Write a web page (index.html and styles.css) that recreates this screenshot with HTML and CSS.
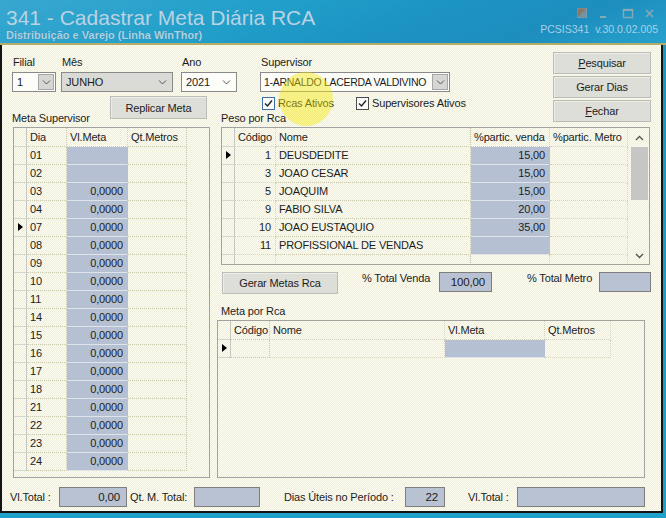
FILE: index.html
```html
<!doctype html>
<html lang="pt-br">

<head>
  <meta charset="utf-8">
  <title>341 - Cadastrar Meta Diária RCA</title>
  <link rel="stylesheet" href="styles.css">
</head>

<body>
  <div id="window">

    <!-- TITLE BAR -->
    <div id="titlebar">
      <div class="title-left">
        <div class="title">341 - Cadastrar Meta Diária RCA</div>
        <div class="subtitle">Distribuição e Varejo (Linha WinThor)</div>
      </div>
      <div class="title-right">
        <svg class="wincontrols" width="80" height="12" viewBox="0 0 80 12">
          <rect x="0.5" y="1.5" width="9" height="9" fill="#6f94a8" stroke="#7c98a8" />
          <polygon points="0.5,1.5 9.5,1.5 0.5,10.5" fill="#927664" />
          <line x1="23" y1="10" x2="29" y2="10" stroke="#86a9ba" stroke-width="2" />
          <rect x="46.5" y="2.5" width="9" height="8" fill="none" stroke="#86a9ba" stroke-width="1.4" />
          <line x1="46" y1="3" x2="56" y2="3" stroke="#86a9ba" stroke-width="2" />
          <line x1="69" y1="3" x2="76" y2="10" stroke="#86a9ba" stroke-width="1.6" />
          <line x1="76" y1="3" x2="69" y2="10" stroke="#86a9ba" stroke-width="1.6" />
        </svg>
        <div class="version">PCSIS341&nbsp; v.30.0.02.005</div>
      </div>
    </div>

    <!-- FORM -->
    <div id="form">

      <div class="filters">
        <div class="field f-filial">
          <label>Filial</label>
          <div class="combo">
            <span class="combo-text">1</span>
            <span class="drop boxed"><svg width="9" height="5" viewBox="0 0 9 5"><path d="M1 0.5 L4.5 4 L8 0.5" fill="none" stroke="#555" /></svg></span>
          </div>
        </div>
        <div class="field f-mes">
          <label>Mês</label>
          <div class="combo gray">
            <span class="combo-text">JUNHO</span>
            <span class="drop"><svg width="9" height="5" viewBox="0 0 9 5"><path d="M1 0.5 L4.5 4 L8 0.5" fill="none" stroke="#555" /></svg></span>
          </div>
        </div>
        <div class="field f-ano">
          <label>Ano</label>
          <div class="combo">
            <span class="combo-text">2021</span>
            <span class="drop"><svg width="9" height="5" viewBox="0 0 9 5"><path d="M1 0.5 L4.5 4 L8 0.5" fill="none" stroke="#555" /></svg></span>
          </div>
        </div>
        <div class="field f-sup">
          <label>Supervisor</label>
          <div class="combo">
            <span class="combo-text">1-ARNALDO LACERDA VALDIVINO</span>
            <span class="drop boxed"><svg width="9" height="5" viewBox="0 0 9 5"><path d="M1 0.5 L4.5 4 L8 0.5" fill="none" stroke="#555" /></svg></span>
          </div>
        </div>
      </div>

      <div class="checks">
        <div class="chk chk-rcas">
          <span class="box hover"><svg width="11" height="11" viewBox="0 0 11 11"><path d="M2 5.5 L4.5 8 L9 2.5" fill="none" stroke="#222" stroke-width="1.4" /></svg></span>
          <span>Rcas Ativos</span>
        </div>
        <div class="chk">
          <span class="box"><svg width="11" height="11" viewBox="0 0 11 11"><path d="M2 5.5 L4.5 8 L9 2.5" fill="none" stroke="#222" stroke-width="1.4" /></svg></span>
          <span>Supervisores Ativos</span>
        </div>
      </div>

      <div class="buttons">
        <button type="button"><u>P</u>esquisar</button>
        <button type="button">Gerar Dias</button>
        <button type="button"><u>F</u>echar</button>
      </div>

      <button type="button" class="replicar">Replicar Meta</button>

      <div class="section-label lbl-sup">Meta Supervisor</div>
      <div class="section-label lbl-peso">Peso por Rca</div>

      <!-- META SUPERVISOR -->
      <div class="grid-box grid-sup">
        <div class="g-row g-head"><span class="ind"></span><span>Dia</span><span>Vl.Meta</span><span>Qt.Metros</span></div>
        <div class="g-row"><span class="ind"></span><span>01</span><span class="blue num"></span><span></span></div>
        <div class="g-row"><span class="ind"></span><span>02</span><span class="blue num"></span><span></span></div>
        <div class="g-row"><span class="ind"></span><span>03</span><span class="blue num">0,0000</span><span></span></div>
        <div class="g-row"><span class="ind"></span><span>04</span><span class="blue num">0,0000</span><span></span></div>
        <div class="g-row"><span class="ind cur"></span><span>07</span><span class="blue num">0,0000</span><span></span></div>
        <div class="g-row"><span class="ind"></span><span>08</span><span class="blue num">0,0000</span><span></span></div>
        <div class="g-row"><span class="ind"></span><span>09</span><span class="blue num">0,0000</span><span></span></div>
        <div class="g-row"><span class="ind"></span><span>10</span><span class="blue num">0,0000</span><span></span></div>
        <div class="g-row"><span class="ind"></span><span>11</span><span class="blue num">0,0000</span><span></span></div>
        <div class="g-row"><span class="ind"></span><span>14</span><span class="blue num">0,0000</span><span></span></div>
        <div class="g-row"><span class="ind"></span><span>15</span><span class="blue num">0,0000</span><span></span></div>
        <div class="g-row"><span class="ind"></span><span>16</span><span class="blue num">0,0000</span><span></span></div>
        <div class="g-row"><span class="ind"></span><span>17</span><span class="blue num">0,0000</span><span></span></div>
        <div class="g-row"><span class="ind"></span><span>18</span><span class="blue num">0,0000</span><span></span></div>
        <div class="g-row"><span class="ind"></span><span>21</span><span class="blue num">0,0000</span><span></span></div>
        <div class="g-row"><span class="ind"></span><span>22</span><span class="blue num">0,0000</span><span></span></div>
        <div class="g-row"><span class="ind"></span><span>23</span><span class="blue num">0,0000</span><span></span></div>
        <div class="g-row"><span class="ind"></span><span>24</span><span class="blue num">0,0000</span><span></span></div>
      </div>

      <!-- PESO POR RCA -->
      <div class="grid-box grid-peso">
        <div class="g-body">
          <div class="g-row g-head"><span class="ind"></span><span>Código</span><span>Nome</span><span>%partic. venda</span><span>%partic. Metro</span></div>
          <div class="g-row"><span class="ind cur"></span><span class="num">1</span><span>DEUSDEDITE</span><span class="blue num">15,00</span><span></span></div>
          <div class="g-row"><span class="ind"></span><span class="num">3</span><span>JOAO CESAR</span><span class="blue num">15,00</span><span></span></div>
          <div class="g-row"><span class="ind"></span><span class="num">5</span><span>JOAQUIM</span><span class="blue num">15,00</span><span></span></div>
          <div class="g-row"><span class="ind"></span><span class="num">9</span><span>FABIO SILVA</span><span class="blue num">20,00</span><span></span></div>
          <div class="g-row"><span class="ind"></span><span class="num">10</span><span>JOAO EUSTAQUIO</span><span class="blue num">35,00</span><span></span></div>
          <div class="g-row"><span class="ind"></span><span class="num">11</span><span>PROFISSIONAL DE VENDAS</span><span class="blue num"></span><span></span></div>
          <div class="g-row"><span class="ind"></span><span></span><span></span><span></span><span></span></div>
        </div>
        <div class="vscroll">
          <div class="sb-arrow up"><svg width="9" height="6" viewBox="0 0 9 6"><path d="M1 5 L4.5 1.5 L8 5" fill="none" stroke="#555" stroke-width="1.4" /></svg></div>
          <div class="sb-track"><div class="sb-thumb"></div></div>
          <div class="sb-arrow down"><svg width="9" height="6" viewBox="0 0 9 6"><path d="M1 1 L4.5 4.5 L8 1" fill="none" stroke="#555" stroke-width="1.4" /></svg></div>
        </div>
      </div>

      <div class="toolbar">
        <button type="button" class="gerar">Gerar Metas Rca</button>
        <span class="tb-label tb-venda">% Total Venda</span>
        <span class="value-box vb-venda">100,00</span>
        <span class="tb-label tb-metro">% Total Metro</span>
        <span class="value-box vb-metro"></span>
      </div>

      <div class="section-label lbl-meta">Meta por Rca</div>

      <!-- META POR RCA -->
      <div class="grid-box grid-meta">
        <div class="g-row g-head"><span class="ind"></span><span>Código</span><span>Nome</span><span>Vl.Meta</span><span>Qt.Metros</span></div>
        <div class="g-row"><span class="ind cur"></span><span></span><span></span><span class="blue"></span><span></span></div>
      </div>

      <!-- TOTALS -->
      <div class="totals">
        <span class="t-label t-vl">Vl.Total :</span>
        <span class="value-box t-box1">0,00</span>
        <span class="t-label t-qt">Qt. M. Total:</span>
        <span class="value-box t-box2"></span>
        <span class="t-label t-dias">Dias Úteis no Período :</span>
        <span class="value-box t-box3">22</span>
        <span class="t-label t-vl2">Vl.Total :</span>
        <span class="value-box t-box4"></span>
      </div>

    </div>

    <!-- mouse highlight -->
    <div class="cursor-spot"></div>
  </div>
</body>

</html>
```

FILE: styles.css
```css
* {
  box-sizing: border-box;
}

body,
html {
  margin: 0;
  padding: 0;
  width: 666px;
  height: 518px;
  overflow: hidden;
  font-family: "Liberation Sans", Arial, sans-serif;
  font-size: 11px;
  color: #1c1c1c;
}

#window {
  position: relative;
  width: 666px;
  height: 518px;
  background: linear-gradient(180deg, #1b95c2, #1ea2cb);
}

/* title bar */

#titlebar {
  height: 45px;
  display: flex;
  justify-content: space-between;
  background: linear-gradient(160deg, #39a7d0 0%, #22a0ca 35%, #1c93c3 60%, #1d8ebe 80%, #27a2cd 100%);
  border-bottom: 2px solid #b4ac68;
}

.title-left {
  padding: 6px 0 0 6px;
}

.title {
  font-size: 21px;
  line-height: 24px;
  color: #bad2e2;
  white-space: nowrap;
}

.subtitle {
  margin-top: -1px;
  font-weight: bold;
  line-height: 13px;
  color: #a9d2e6;
  text-shadow: 0 0 1px #3a7c9c;
}

.title-right {
  display: flex;
  flex-direction: column;
  align-items: flex-end;
  padding-right: 8px;
}

.wincontrols {
  margin-top: 7px;
  margin-right: 1px;
}

.version {
  margin-top: 4px;
  font-size: 10.5px;
  line-height: 13px;
  color: #a6d0e6;
}

/* form body */

#form {
  width: 663px;
  height: 468px;
  padding: 7px 0 0 10px;
  border-left: 2px solid #141414;
  border-right: 2px solid #141414;
  border-bottom: 2px solid #141414;
  background: repeating-conic-gradient(#fdfdf4 0 25%, #eeeedb 0 50%) 0 0 / 2px 2px;
  display: grid;
  grid-template-columns: 198px 7px 336px 98px;
  grid-template-rows: 40px 20px 15px 138px 35px 20px 158px 33px;
  letter-spacing: -0.15px;
}

label {
  display: block;
  line-height: 13px;
  margin-bottom: 3px;
  padding-left: 1px;
}

.filters {
  grid-column: 1 / 4;
  grid-row: 1;
  display: flex;
  align-items: flex-end;
}

.f-filial {
  width: 44px;
}

.f-mes {
  width: 112px;
  margin-left: 5px;
}

.f-ano {
  width: 56px;
  margin-left: 8px;
}

.f-sup {
  width: 190px;
  margin-left: 23px;
}

.combo {
  height: 20px;
  border: 1px solid #8a8a8a;
  background: #fcfcf8;
  display: flex;
  align-items: center;
}

.combo.gray {
  background: #dadad6;
}

.combo-text {
  flex: 1;
  padding-left: 4px;
  white-space: nowrap;
  overflow: hidden;
}

.f-sup .combo-text {
  padding-left: 3px;
  font-size: 10.5px;
  letter-spacing: -0.3px;
}

.drop {
  width: 17px;
  height: 18px;
  display: flex;
  align-items: center;
  justify-content: center;
  margin-right: 1px;
}

.drop.boxed {
  height: 16px;
  width: 16px;
  background: #d6d6d2;
  border: 1px solid #a6a6a6;
}

/* checkboxes */

.checks {
  grid-column: 3;
  grid-row: 2;
  padding: 5px 0 0 45px;
  display: flex;
  align-items: flex-start;
}

.chk {
  display: flex;
  align-items: center;
  gap: 3px;
  line-height: 13px;
}

.chk-rcas {
  width: 94px;
}

.box {
  width: 13px;
  height: 13px;
  border: 1px solid #4c4c4c;
  background: #fafafa;
  display: flex;
  align-items: center;
  justify-content: center;
}

.box.hover {
  border-color: #3b6fa6;
}

/* buttons */

button {
  font: 11px "Liberation Sans", Arial, sans-serif;
  letter-spacing: -0.15px;
  color: #1c1c1c;
  background: #deded9;
  border: 1px solid #bcbcb8;
  box-shadow: inset 1px 1px 0 #ececea;
  padding: 0;
  cursor: pointer;
}

.buttons {
  grid-column: 4;
  grid-row: 1 / 4;
  display: flex;
  flex-direction: column;
  gap: 2px;
}

.buttons button {
  height: 22px;
}

.replicar {
  grid-column: 1;
  grid-row: 2 / 4;
  justify-self: end;
  align-self: start;
  width: 97px;
  height: 23px;
  margin: 4px 3px 0 0;
}

.section-label {
  line-height: 13px;
  white-space: nowrap;
}

.lbl-sup {
  grid-column: 1;
  grid-row: 3;
}

.lbl-peso {
  grid-column: 3;
  grid-row: 3;
  padding-left: 4px;
}

.lbl-meta {
  grid-column: 3 / 5;
  grid-row: 6;
  align-self: end;
  margin-bottom: 2px;
  padding-left: 4px;
}

/* data grids */

.grid-box {
  border: 1px solid #a2a2a0;
  overflow: hidden;
}

.g-row {
  display: grid;
  height: 18px;
}

.g-row.g-head {
  height: 19px;
}

.g-row span {
  display: block;
  padding: 0 3px;
  line-height: 17px;
  white-space: nowrap;
  overflow: hidden;
  border-right: 1px dotted #cfcfb8;
  border-bottom: 1px dotted #cfcfb8;
}

.g-head span {
  line-height: 18px;
}

.g-row span.num {
  text-align: right;
  padding-right: 4px;
}

.g-row span.blue {
  background: #b5c0d3;
  border-bottom: 1px solid #dfe4ec;
  border-right-color: #b5c0d3;
}

.g-row span.ind {
  position: relative;
  border-right: 1px solid #c6c6c2;
  border-bottom: 1px solid #d6d6d0;
}

.ind.cur::after {
  content: "";
  position: absolute;
  left: 4px;
  top: 4px;
  border-left: 5px solid #000;
  border-top: 4.5px solid transparent;
  border-bottom: 4.5px solid transparent;
}

.grid-sup {
  grid-column: 1;
  grid-row: 4 / 8;
  margin-left: 1px;
}

.grid-sup .g-row {
  grid-template-columns: 13px 40px 61px 59px;
}

.grid-peso {
  grid-column: 3 / 5;
  grid-row: 4;
  margin-left: 4px;
  width: 429px;
  display: flex;
}

.grid-peso .g-body {
  width: 406px;
}

.grid-peso .g-row {
  grid-template-columns: 13px 41px 195px 79px 78px;
}

.vscroll {
  width: 17px;
  margin-left: 3px;
  display: flex;
  flex-direction: column;
}

.sb-arrow {
  height: 19px;
  display: flex;
  align-items: center;
  justify-content: center;
}

.sb-arrow.down {
  height: 17px;
}

.sb-track {
  flex: 1;
}

.sb-thumb {
  height: 53px;
  background: #c6c6c4;
}

.grid-meta {
  grid-column: 3 / 5;
  grid-row: 7;
  width: 428px;
}

.grid-meta .g-row {
  grid-template-columns: 13px 39px 175px 100px 66px;
}

/* toolbar & totals */

.toolbar {
  grid-column: 3 / 5;
  grid-row: 5;
  display: flex;
  align-items: flex-start;
  padding-top: 7px;
}

.gerar {
  width: 116px;
  height: 22px;
  margin-left: 5px;
}

.tb-label {
  line-height: 13px;
  white-space: nowrap;
}

.tb-venda {
  width: 77px;
  margin-left: 24px;
}

.tb-metro {
  width: 72px;
  margin-left: 35px;
}

.value-box {
  height: 20px;
  border: 1px solid #7e7e7e;
  background: #b8c2d2;
  text-align: right;
  padding-right: 6px;
  line-height: 19px;
  font-size: 11.5px;
}

.vb-venda {
  width: 53px;
}

.vb-metro {
  width: 52px;
}

.totals {
  grid-column: 1 / 5;
  grid-row: 8;
  margin-left: -2px;
  padding-top: 9px;
  display: flex;
  align-items: flex-start;
}

.t-label {
  line-height: 20px;
  white-space: nowrap;
}

.t-vl {
  width: 49px;
}

.t-box1 {
  width: 68px;
}

.t-qt {
  width: 64px;
  margin-left: 3px;
}

.t-box2 {
  width: 66px;
}

.t-dias {
  width: 121px;
  margin-left: 24px;
}

.t-box3 {
  width: 40px;
}

.t-vl2 {
  width: 49px;
  margin-left: 23px;
}

.t-box4 {
  width: 128px;
}

/* yellow mouse highlight from the capture */

.cursor-spot {
  position: absolute;
  left: 279px;
  top: 72px;
  width: 54px;
  height: 54px;
  border-radius: 50%;
  background: rgba(246, 232, 10, 0.45);
  pointer-events: none;
}
```
